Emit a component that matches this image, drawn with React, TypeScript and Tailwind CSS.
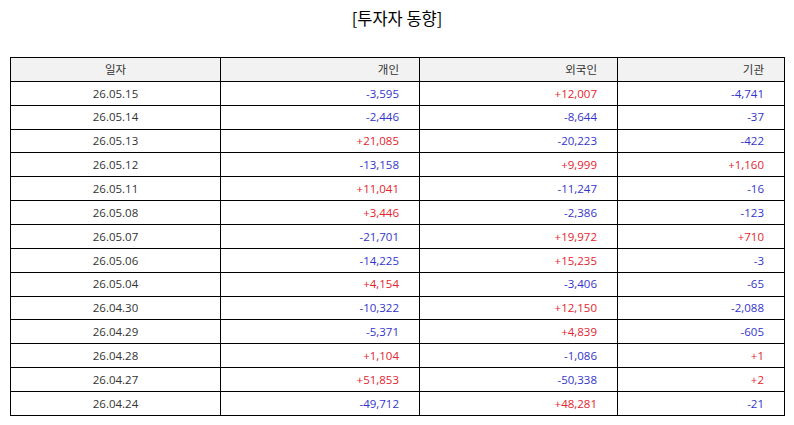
const rows: [string, string, string, string][] = [
  ["26.05.15", "-3,595", "+12,007", "-4,741"],
  ["26.05.14", "-2,446", "-8,644", "-37"],
  ["26.05.13", "+21,085", "-20,223", "-422"],
  ["26.05.12", "-13,158", "+9,999", "+1,160"],
  ["26.05.11", "+11,041", "-11,247", "-16"],
  ["26.05.08", "+3,446", "-2,386", "-123"],
  ["26.05.07", "-21,701", "+19,972", "+710"],
  ["26.05.06", "-14,225", "+15,235", "-3"],
  ["26.05.04", "+4,154", "-3,406", "-65"],
  ["26.04.30", "-10,322", "+12,150", "-2,088"],
  ["26.04.29", "-5,371", "+4,839", "-605"],
  ["26.04.28", "+1,104", "-1,086", "+1"],
  ["26.04.27", "+51,853", "-50,338", "+2"],
  ["26.04.24", "-49,712", "+48,281", "-21"],
];

function Num({ v }: { v: string }) {
  const up = v.startsWith("+");
  return (
    <td
      className={`border border-black h-[23.87px] p-0 pr-5 text-right ${
        up ? "text-[#e3242e]" : "text-[#3434cc]"
      }`}
    >
      {v}
    </td>
  );
}

export default function App() {
  return (
    <div
      className="w-[794px] h-[425px] bg-white text-[#333]"
      style={{ fontFamily: '"Open Sans", "Noto Sans CJK KR", sans-serif' }}
    >
      <h1
        className="pt-[6px] h-[57px] text-center text-[16.5px] leading-6 text-black"
        style={{ fontFamily: '"Noto Sans CJK KR", sans-serif' }}
      >
        [투자자 동향]
      </h1>
      <table className="ml-[10px] w-[775px] border-collapse table-fixed text-[11.5px] leading-none">
        <colgroup>
          <col className="w-[210px]" />
          <col className="w-[199px]" />
          <col className="w-[198px]" />
          <col />
        </colgroup>
        <thead>
          <tr className="bg-[#f2f2f2]">
            <th className="border border-black h-[23.87px] p-0 font-normal text-center">일자</th>
            <th className="border border-black h-[23.87px] p-0 pr-5 font-normal text-right">개인</th>
            <th className="border border-black h-[23.87px] p-0 pr-5 font-normal text-right">외국인</th>
            <th className="border border-black h-[23.87px] p-0 pr-5 font-normal text-right">기관</th>
          </tr>
        </thead>
        <tbody>
          {rows.map((r) => (
            <tr key={r[0]}>
              <td className="border border-black h-[23.87px] p-0 text-center">{r[0]}</td>
              <Num v={r[1]} />
              <Num v={r[2]} />
              <Num v={r[3]} />
            </tr>
          ))}
        </tbody>
      </table>
    </div>
  );
}
